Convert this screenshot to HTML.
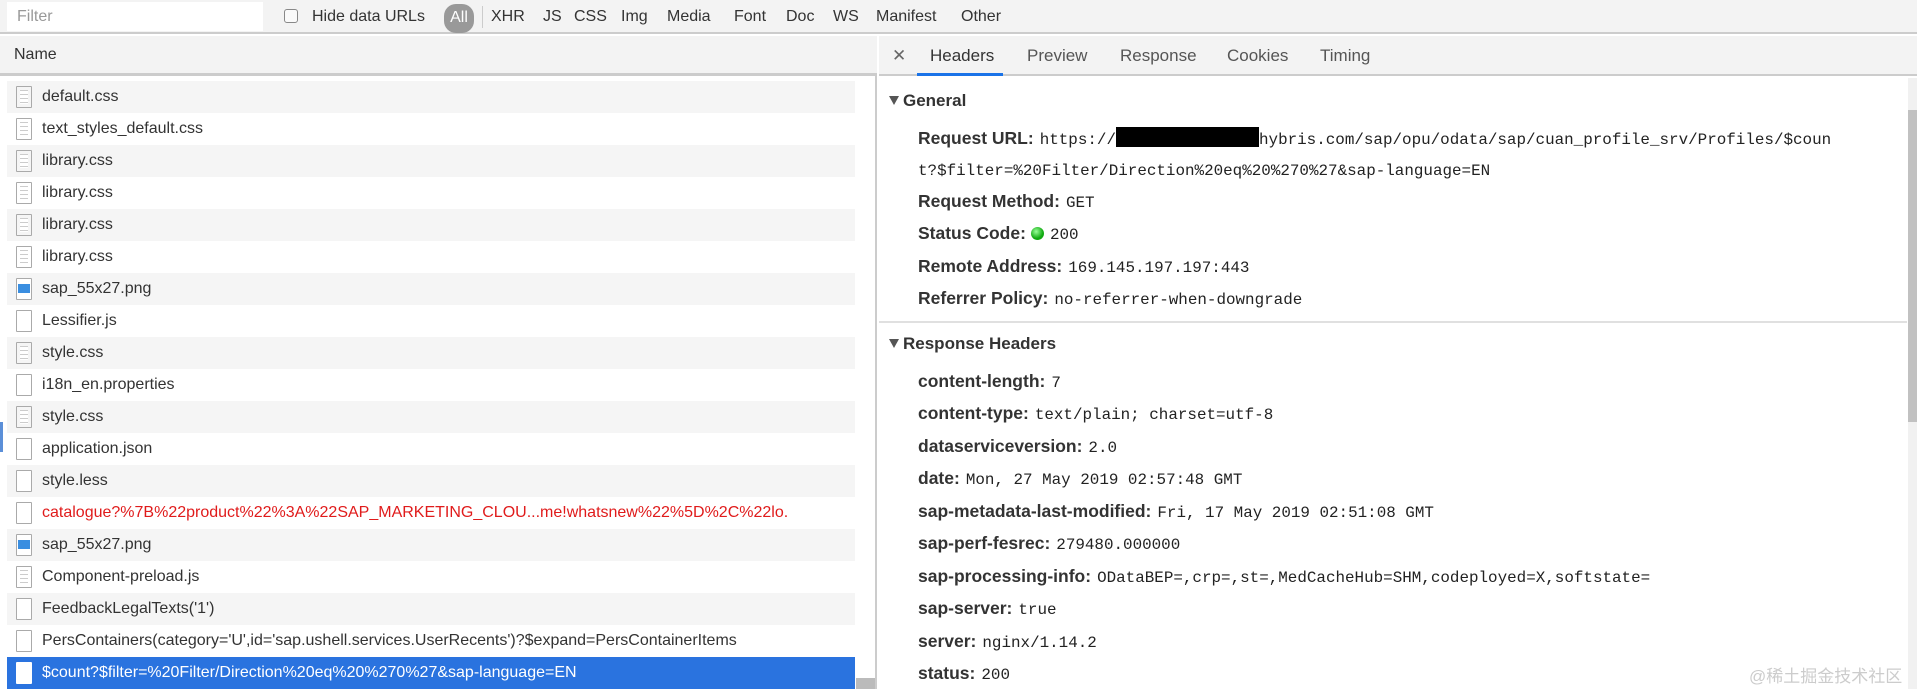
<!DOCTYPE html>
<html><head><meta charset="utf-8"><style>
*{box-sizing:border-box;margin:0;padding:0}
body{width:1917px;height:689px;overflow:hidden;background:#fff;font-family:"Liberation Sans",sans-serif;color:#333;position:relative}
.tb{position:absolute;left:0;top:0;width:1917px;height:34px;background:#f3f3f3;border-bottom:2px solid #ccc}
.filter{position:absolute;left:7px;top:2px;width:256px;height:29px;background:#fff;color:#999;font-size:16px;padding:6px 10px}
.cb{position:absolute;left:284px;top:9px;width:14px;height:14px;border:1px solid #888;border-radius:3px;background:#fafafa}
.tt{position:absolute;top:8px;font-size:16px;color:#333;white-space:nowrap}
.all{position:absolute;left:444px;top:4px;width:30px;height:29px;border-radius:12px;background:#999;color:#fff;font-size:16px;text-align:center;padding-top:5px}
.sep{position:absolute;left:482px;top:6px;width:1px;height:22px;background:#ccc}
.left{position:absolute;left:0;top:36px;width:877px;height:653px;border-right:2px solid #ccc}
.hdr{position:absolute;left:0;top:0;width:877px;height:40px;background:#f3f3f3;border-bottom:3px solid #ccc;font-size:16px;padding:10px 14px}
.row{position:absolute;left:7px;width:848px;height:32px;font-size:16px;padding:7px 0 0 35px;white-space:nowrap;overflow:hidden}
.row.g{background:#f5f5f5}.row.w{background:#fff}
.row.sel{background:#2a73df;color:#fff}
.ic{position:absolute;left:9px;top:5px;width:16px;height:22px;border:1px solid #aaa;background:#fff;border-radius:1px}
.ic.l{background:repeating-linear-gradient(#fff 0 3px,#ccc 3px 4px);background-clip:content-box;padding:3px 3px}
.ic.img::after{content:"";position:absolute;left:1px;top:5px;width:12px;height:9px;background:#3a8ee0}
.sel .ic{border-color:#fff}
.right{position:absolute;left:879px;top:36px;width:1038px;height:653px}
.tabs{position:absolute;left:0;top:0;width:1038px;height:40px;background:#f3f3f3;border-bottom:2px solid #ccc}
.tab{position:absolute;top:10px;font-size:17px;color:#555}
.sec{position:absolute;left:10px;font-size:17px;font-weight:bold;color:#333;top:0}
.sec::before{content:"";display:inline-block;width:0;height:0;border-left:5px solid transparent;border-right:5px solid transparent;border-top:9px solid #555;margin-right:4px;vertical-align:1px}
.kv{position:absolute;left:39px;font-size:17.5px;white-space:nowrap}
.kv b{color:#333}
.kv span{font-family:"Liberation Mono",monospace;font-size:15.9px;color:#222;margin-left:6px}
.dot{display:inline-block;width:13px;height:13px;border-radius:50%;background:radial-gradient(circle at 40% 35%,#9f9,#1a1 60%);vertical-align:-1px;margin-left:5px}
</style></head><body>
<div class="tb">
<div class="filter">Filter</div>
<div class="cb"></div>
<div class="tt" style="left:312px">Hide data URLs</div>
<div class="all">All</div>
<div class="sep"></div>
<div class="tt" style="left:491px">XHR</div>
<div class="tt" style="left:543px">JS</div>
<div class="tt" style="left:574px">CSS</div>
<div class="tt" style="left:621px">Img</div>
<div class="tt" style="left:667px">Media</div>
<div class="tt" style="left:734px">Font</div>
<div class="tt" style="left:786px">Doc</div>
<div class="tt" style="left:833px">WS</div>
<div class="tt" style="left:876px">Manifest</div>
<div class="tt" style="left:961px">Other</div>
</div>
<div class="left">
<div class="hdr">Name</div>
<div class="row g" style="top:45px"><div class="ic l"></div>default.css</div>
<div class="row w" style="top:77px"><div class="ic l"></div>text_styles_default.css</div>
<div class="row g" style="top:109px"><div class="ic l"></div>library.css</div>
<div class="row w" style="top:141px"><div class="ic l"></div>library.css</div>
<div class="row g" style="top:173px"><div class="ic l"></div>library.css</div>
<div class="row w" style="top:205px"><div class="ic l"></div>library.css</div>
<div class="row g" style="top:237px"><div class="ic img"></div>sap_55x27.png</div>
<div class="row w" style="top:269px"><div class="ic"></div>Lessifier.js</div>
<div class="row g" style="top:301px"><div class="ic l"></div>style.css</div>
<div class="row w" style="top:333px"><div class="ic"></div>i18n_en.properties</div>
<div class="row g" style="top:365px"><div class="ic l"></div>style.css</div>
<div class="row w" style="top:397px"><div class="ic"></div>application.json</div>
<div class="row g" style="top:429px"><div class="ic"></div>style.less</div>
<div class="row w" style="top:461px;color:#e01b1b"><div class="ic"></div>catalogue?%7B%22product%22%3A%22SAP_MARKETING_CLOU...me!whatsnew%22%5D%2C%22lo.</div>
<div class="row g" style="top:493px"><div class="ic img"></div>sap_55x27.png</div>
<div class="row w" style="top:525px"><div class="ic l"></div>Component-preload.js</div>
<div class="row g" style="top:557px"><div class="ic"></div>FeedbackLegalTexts('1')</div>
<div class="row w" style="top:589px"><div class="ic"></div>PersContainers(category='U',id='sap.ushell.services.UserRecents')?$expand=PersContainerItems</div>
<div class="row sel" style="top:621px"><div class="ic"></div>$count?$filter=%20Filter/Direction%20eq%20%270%27&amp;sap-language=EN</div>
<div style="position:absolute;left:856px;top:642px;width:19px;height:11px;background:#bbb"></div>
<div style="position:absolute;left:0;top:386px;width:3px;height:30px;background:#5b8fd8"></div>
</div>
<div class="right">
<div class="tabs">
<div class="tab" style="left:13px;color:#666">✕</div>
<div class="tab" style="left:51px;color:#333">Headers</div>
<div class="tab" style="left:148px">Preview</div>
<div class="tab" style="left:241px">Response</div>
<div class="tab" style="left:348px">Cookies</div>
<div class="tab" style="left:441px">Timing</div>
<div style="position:absolute;left:38px;top:37px;width:86px;height:3px;background:#1a73e8"></div>
</div>
<div class="sec" style="top:55px">General</div>
<div class="kv" style="top:91px"><b>Request URL:</b><span>https://<i style="display:inline-block;width:143px;height:20px;background:#000;vertical-align:-3px"></i>hybris.com/sap/opu/odata/sap/cuan_profile_srv/Profiles/$coun</span></div>
<div class="kv" style="top:123px"><span style="margin-left:0">t?$filter=%20Filter/Direction%20eq%20%270%27&amp;sap-language=EN</span></div>
<div class="kv" style="top:155px"><b>Request Method:</b><span>GET</span></div>
<div class="kv" style="top:187px"><b>Status Code:</b><i class="dot"></i><span>200</span></div>
<div class="kv" style="top:220px"><b>Remote Address:</b><span>169.145.197.197:443</span></div>
<div class="kv" style="top:252px"><b>Referrer Policy:</b><span>no-referrer-when-downgrade</span></div>
<div style="position:absolute;left:0;top:285px;width:1028px;height:2px;background:#e0e0e0"></div>
<div class="sec" style="top:298px">Response Headers</div>
<div class="kv" style="top:335px"><b>content-length:</b><span>7</span></div>
<div class="kv" style="top:367px"><b>content-type:</b><span>text/plain; charset=utf-8</span></div>
<div class="kv" style="top:400px"><b>dataserviceversion:</b><span>2.0</span></div>
<div class="kv" style="top:432px"><b>date:</b><span>Mon, 27 May 2019 02:57:48 GMT</span></div>
<div class="kv" style="top:465px"><b>sap-metadata-last-modified:</b><span>Fri, 17 May 2019 02:51:08 GMT</span></div>
<div class="kv" style="top:497px"><b>sap-perf-fesrec:</b><span>279480.000000</span></div>
<div class="kv" style="top:530px"><b>sap-processing-info:</b><span>ODataBEP=,crp=,st=,MedCacheHub=SHM,codeployed=X,softstate=</span></div>
<div class="kv" style="top:562px"><b>sap-server:</b><span>true</span></div>
<div class="kv" style="top:595px"><b>server:</b><span>nginx/1.14.2</span></div>
<div class="kv" style="top:627px"><b>status:</b><span>200</span></div>
<div style="position:absolute;left:1029px;top:42px;width:9px;height:611px;background:#f1f1f1"></div>
<div style="position:absolute;left:1029px;top:74px;width:9px;height:312px;background:#c1c1c1"></div>
<div style="position:absolute;left:870px;top:626px;font-size:17px;color:#ccc;font-family:'Liberation Sans','Noto Sans CJK SC',sans-serif">@稀土掘金技术社区</div>
</div>
</body></html>
